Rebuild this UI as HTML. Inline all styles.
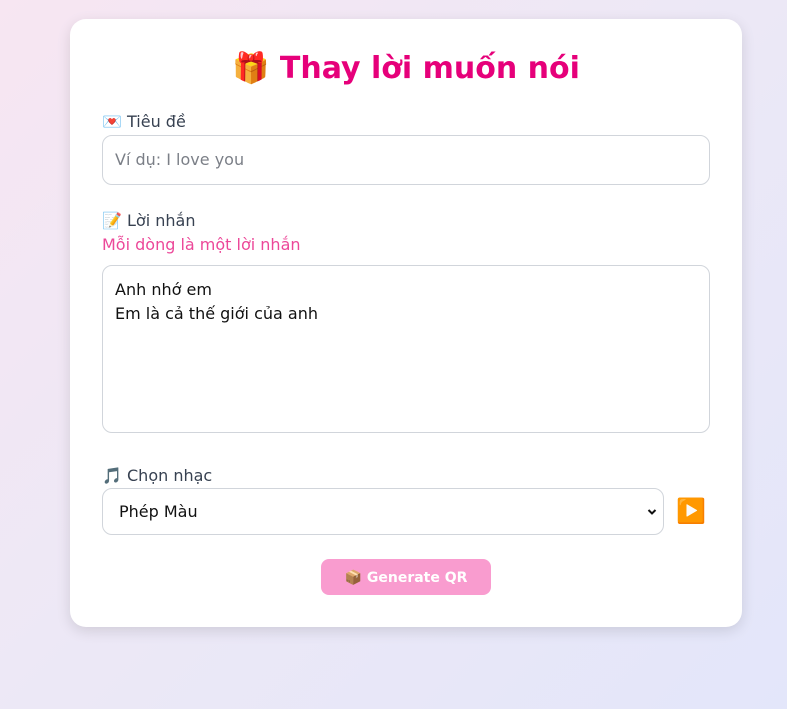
<!DOCTYPE html>
<html><head><meta charset="utf-8"><style>
html,body{margin:0;padding:0;width:787px;height:709px;overflow:hidden}
body{background:linear-gradient(135deg,#f7e6f2 0%,#ece8f6 50%,#e3e6fa 100%);font-family:"DejaVu Sans","Liberation Sans",sans-serif;position:relative}
.card{position:absolute;left:70px;top:19px;width:672px;height:608px;background:#fff;border-radius:16px;box-shadow:0 4px 14px rgba(0,0,0,.12)}
.a{position:absolute;white-space:nowrap}
h1{position:absolute;left:0;width:672px;top:30px;margin:0;text-align:center;font-size:30px;font-weight:bold;color:#e6007a;line-height:40px}
.lbl{font-size:16px;color:#374151;line-height:20px}
.box{position:absolute;border:1px solid #d1d5db;border-radius:10px;box-sizing:border-box;background:#fff}
</style></head><body>
<div class="card">
<h1>🎁 Thay lời muốn nói</h1>
<div class="a lbl" style="left:32px;top:93px">💌 Tiêu đề</div>
<div class="box" style="left:32px;top:116px;width:608px;height:50px"><div class="a" style="left:12px;top:14px;font-size:16px;color:#7b7f87">Ví dụ: I love you</div></div>
<div class="a lbl" style="left:32px;top:192px">📝 Lời nhắn</div>
<div class="a" style="left:32px;top:216px;font-size:16px;color:#ec4899;line-height:20px">Mỗi dòng là một lời nhắn</div>
<div class="box" style="left:32px;top:246px;width:608px;height:168px"><div class="a" style="left:12px;top:12px;font-size:16px;color:#111;line-height:24px">Anh nhớ em<br>Em là cả thế giới của anh</div></div>
<div class="a lbl" style="left:32px;top:447px">🎵 Chọn nhạc</div>
<div class="box" style="left:32px;top:469px;width:562px;height:47px"><div class="a" style="left:16px;top:13px;font-size:16px;color:#111">Phép Màu</div>
<svg class="a" style="left:544px;top:19px" width="10" height="8" viewBox="0 0 10 8"><path d="M1.5 2 L5 5.5 L8.5 2" stroke="#111" stroke-width="2" fill="none"/></svg></div>
<div class="a" style="left:606px;top:478px;font-size:24px;line-height:28px">▶️</div>
<div class="a" style="left:251px;top:540px;width:170px;height:36px;background:#f99ccf;border-radius:8px;color:#fff;font-weight:bold;font-size:14px;text-align:center;line-height:38px">📦 Generate QR</div>
</div>
</body></html>
